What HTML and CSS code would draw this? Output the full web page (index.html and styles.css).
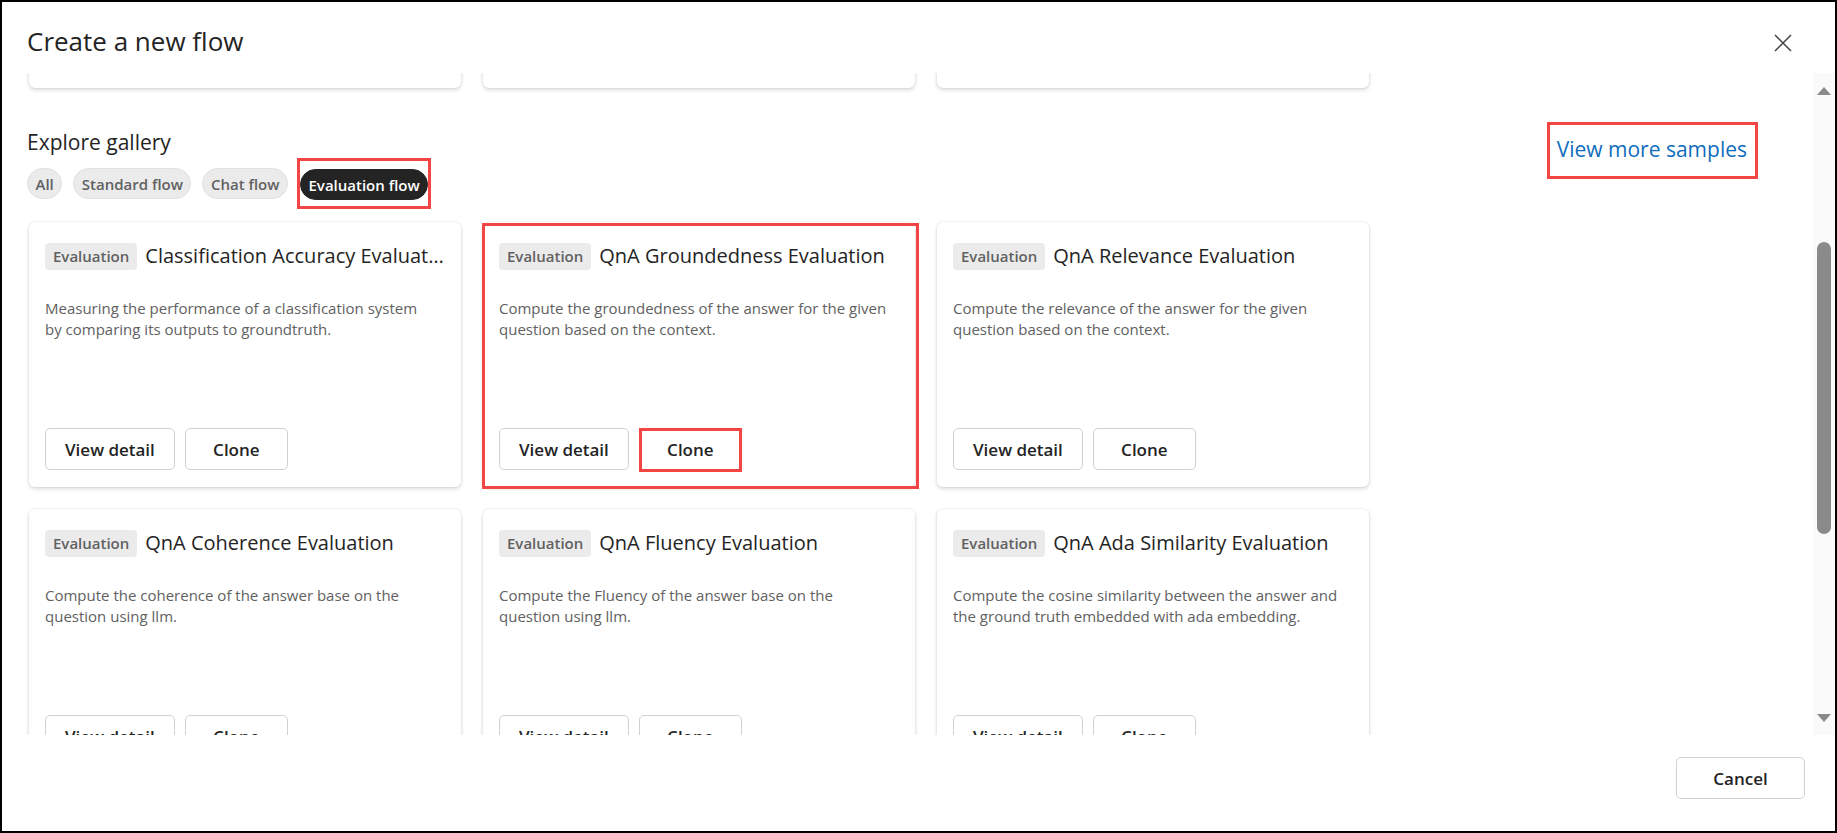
FILE: index.html
```html
<!DOCTYPE html>
<html lang="en">
<head>
<meta charset="utf-8">
<title>Create a new flow</title>
<link rel="stylesheet" href="styles.css">
</head>
<body>
<div class="dialog">
  <header class="dlg-header">
    <h1 class="dlg-title">Create a new flow</h1>
    <button class="close-btn" aria-label="Close">
      <svg width="18" height="18" viewBox="0 0 18 18"><path d="M1 1L17 17M17 1L1 17" stroke="#424242" stroke-width="1.5" fill="none"/></svg>
    </button>
  </header>
  <div class="dlg-body">
    <div class="scroll-view">
      <div class="scroll-content">
        <div class="card-grid type-grid">
          <div class="card type-card"></div>
          <div class="card type-card"></div>
          <div class="card type-card"></div>
        </div>
        <section class="gallery">
          <div class="gallery-head">
            <div class="gallery-left">
              <h2 class="gallery-title">Explore gallery</h2>
              <div class="chips">
                <span class="chip">All</span>
                <span class="chip">Standard flow</span>
                <span class="chip">Chat flow</span>
                <span class="annot-chip"><span class="chip chip-selected">Evaluation flow</span></span>
              </div>
            </div>
            <a class="more-link">View more samples</a>
          </div>
          <div class="card-grid">
            <div class="card">
              <div class="card-head"><span class="badge">Evaluation</span><span class="card-title">Classification Accuracy Evaluation</span></div>
              <p class="card-desc">Measuring the performance of a classification system by comparing its outputs to groundtruth.</p>
              <div class="card-actions"><button class="btn">View detail</button><button class="btn">Clone</button></div>
            </div>
            <div class="card annot-card">
              <div class="card-head"><span class="badge">Evaluation</span><span class="card-title">QnA Groundedness Evaluation</span></div>
              <p class="card-desc">Compute the groundedness of the answer for the given question based on the context.</p>
              <div class="card-actions"><button class="btn">View detail</button><button class="btn annot-btn">Clone</button></div>
            </div>
            <div class="card">
              <div class="card-head"><span class="badge">Evaluation</span><span class="card-title">QnA Relevance Evaluation</span></div>
              <p class="card-desc">Compute the relevance of the answer for the given question based on the context.</p>
              <div class="card-actions"><button class="btn">View detail</button><button class="btn">Clone</button></div>
            </div>
            <div class="card">
              <div class="card-head"><span class="badge">Evaluation</span><span class="card-title">QnA Coherence Evaluation</span></div>
              <p class="card-desc">Compute the coherence of the answer base on the question using llm.</p>
              <div class="card-actions"><button class="btn">View detail</button><button class="btn">Clone</button></div>
            </div>
            <div class="card">
              <div class="card-head"><span class="badge">Evaluation</span><span class="card-title">QnA Fluency Evaluation</span></div>
              <p class="card-desc">Compute the Fluency of the answer base on the question using llm.</p>
              <div class="card-actions"><button class="btn">View detail</button><button class="btn">Clone</button></div>
            </div>
            <div class="card">
              <div class="card-head"><span class="badge">Evaluation</span><span class="card-title">QnA Ada Similarity Evaluation</span></div>
              <p class="card-desc">Compute the cosine similarity between the answer and the ground truth embedded with ada embedding.</p>
              <div class="card-actions"><button class="btn">View detail</button><button class="btn">Clone</button></div>
            </div>
          </div>
        </section>
      </div>
    </div>
    <div class="scrollbar">
      <span class="sb-up"></span>
      <span class="sb-thumb"></span>
      <span class="sb-down"></span>
    </div>
  </div>
  <footer class="dlg-footer">
    <button class="btn btn-cancel">Cancel</button>
  </footer>
</div>
</body>
</html>
```

FILE: styles.css
```css
* { box-sizing: border-box; }

html, body {
  margin: 0;
  padding: 0;
  background: #ffffff;
}

body {
  font-family: "Open Sans", "Noto Sans", sans-serif;
  color: #242424;
}

.dialog {
  width: 1837px;
  height: 833px;
  border: 2px solid #000000;
  background: #ffffff;
  display: flex;
  flex-direction: column;
  overflow: hidden;
}

/* Header */
.dlg-header {
  height: 71px;
  flex: 0 0 71px;
  display: flex;
  justify-content: space-between;
  align-items: flex-start;
  padding: 21px 36px 0 25px;
}

.dlg-title {
  margin: 0;
  font-size: 26px;
  line-height: 36px;
  font-weight: 400;
  color: #242424;
}

.close-btn {
  width: 32px;
  height: 32px;
  margin-top: 4px;
  padding: 0;
  border: 0;
  background: transparent;
  display: flex;
  align-items: center;
  justify-content: center;
}

/* Body */
.dlg-body {
  flex: 0 0 662px;
  height: 662px;
  display: flex;
}

.scroll-view {
  flex: 1;
  overflow: hidden;
  padding-left: 25px;
}

.scroll-content {
  margin-top: -105px;
}

.card-grid {
  display: grid;
  grid-template-columns: repeat(3, 432px);
  column-gap: 22px;
  row-gap: 22px;
  margin-left: 2px;
}

.card {
  background: #ffffff;
  border-radius: 6px;
  box-shadow: 0 0 2px rgba(0, 0, 0, 0.12), 0 2px 4px rgba(0, 0, 0, 0.14);
  height: 265px;
  padding: 20px 16px 17px 16px;
  display: flex;
  flex-direction: column;
}

.type-card {
  height: 120px;
}

/* Gallery header */
.gallery-head {
  margin-top: 34px;
  display: flex;
  justify-content: space-between;
  align-items: flex-start;
  padding-right: 55px;
}

.gallery-left {
  padding-top: 6px;
}

.gallery-title {
  margin: 0;
  font-size: 21px;
  line-height: 28px;
  font-weight: 400;
  color: #242424;
}

.chips {
  margin-top: 2px;
  display: flex;
  align-items: center;
  gap: 11px;
}

.chip {
  display: inline-flex;
  align-items: center;
  height: 31px;
  padding: 0 7.5px;
  border: 1px solid #e0e0e0;
  background: #ebebeb;
  border-radius: 16px;
  font-size: 15px;
  font-weight: 600;
  color: #616161;
  white-space: nowrap;
}

.chip-selected {
  background: #242424;
  border-color: #242424;
  color: #ffffff;
}

.annot-chip {
  display: inline-flex;
  border: 3px solid #f44545;
  padding: 8px 0 6px 0;
  margin-left: -2px;
}

.more-link {
  display: block;
  border: 3px solid #f44545;
  padding: 10px 8px 13px 7px;
  font-size: 21px;
  line-height: 28px;
  font-weight: 400;
  color: #0f6cbd;
  text-decoration: none;
  white-space: nowrap;
}

.gallery .card-grid {
  margin-top: 13px;
}

/* Card contents */
.card-head {
  display: flex;
  align-items: center;
  gap: 8px;
  height: 28px;
  min-width: 0;
}

.badge {
  flex: 0 0 auto;
  height: 27px;
  padding: 0 8px;
  display: inline-flex;
  align-items: center;
  background: #ebebeb;
  border-radius: 4px;
  font-size: 15px;
  font-weight: 600;
  color: #616161;
}

.card-title {
  flex: 1 1 auto;
  min-width: 0;
  font-size: 20px;
  line-height: 28px;
  font-weight: 400;
  color: #242424;
  white-space: nowrap;
  overflow: hidden;
  text-overflow: ellipsis;
}

.card-desc {
  flex: 1 1 auto;
  margin: 28px 12px 0 0;
  font-size: 15px;
  line-height: 21px;
  color: #616161;
}

.card-actions {
  display: flex;
  gap: 10px;
}

.btn {
  height: 42px;
  min-width: 103px;
  padding: 0 19px;
  border: 1px solid #d1d1d1;
  border-radius: 5px;
  background: #ffffff;
  font-family: "Open Sans", "Noto Sans", sans-serif;
  font-size: 17px;
  font-weight: 600;
  color: #242424;
  white-space: nowrap;
}

/* Annotation boxes */
.annot-card,
.annot-btn {
  position: relative;
}

.annot-card::after {
  content: "";
  position: absolute;
  top: 1px;
  left: -1px;
  right: -4px;
  bottom: -2px;
  border: 3px solid #f44545;
  pointer-events: none;
}

.annot-btn::after {
  content: "";
  position: absolute;
  top: -1px;
  left: -1px;
  right: -1px;
  bottom: -3px;
  border: 3px solid #f44545;
  pointer-events: none;
}

/* Scrollbar */
.scrollbar {
  flex: 0 0 22px;
  width: 22px;
  background: #fafafa;
  display: flex;
  flex-direction: column;
  align-items: center;
  padding: 14px 0 13px 0;
}

.sb-up {
  width: 0;
  height: 0;
  border-left: 7.5px solid transparent;
  border-right: 7.5px solid transparent;
  border-bottom: 8px solid #8a8a8a;
}

.sb-thumb {
  margin-top: 147px;
  width: 14px;
  height: 292px;
  border-radius: 7px;
  background: #8a8a8a;
}

.sb-down {
  margin-top: auto;
  width: 0;
  height: 0;
  border-left: 7.5px solid transparent;
  border-right: 7.5px solid transparent;
  border-top: 8px solid #8a8a8a;
}

/* Footer */
.dlg-footer {
  flex: 1 1 auto;
  display: flex;
  justify-content: flex-end;
  align-items: flex-start;
  padding: 22px 30px 0 0;
}

.btn-cancel {
  min-width: 129px;
}
```
